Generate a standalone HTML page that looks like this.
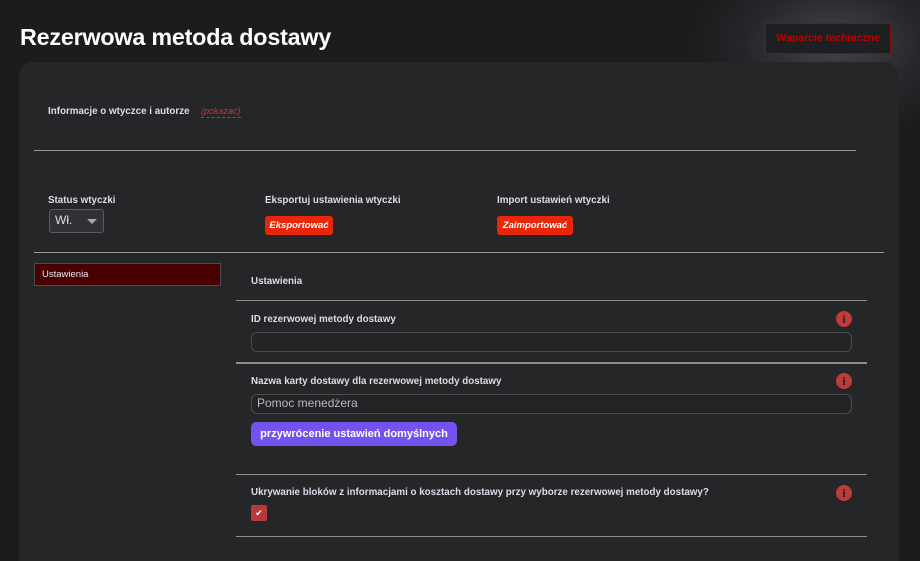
<!DOCTYPE html>
<html><head><meta charset="utf-8"><style>
*{margin:0;padding:0;box-sizing:border-box}
html,body{width:920px;height:561px;overflow:hidden}
body{background:#1b1c1e;font-family:"Liberation Sans",sans-serif;position:relative;color:#dfe0ea}
.a{position:absolute;white-space:nowrap}
h1{position:absolute;left:20px;top:24px;font-size:23.3px;font-weight:bold;color:#fff;letter-spacing:-0.2px}
.glow{position:absolute;left:690px;top:-50px;width:290px;height:190px;border-radius:50%;background:radial-gradient(ellipse at center,rgba(95,95,100,0.6),rgba(60,60,64,0.3) 45%,rgba(27,28,30,0) 70%)}
.panel{position:absolute;left:19px;top:62px;width:880px;height:499px;background:#252628;border-radius:14px 14px 0 0}
.sup{position:absolute;left:765px;top:23px;width:126px;height:31px;border:1px solid #8a0c0c;background:#1e1f21;color:#c00000;font-size:10.5px;font-weight:bold;text-align:center;line-height:29px}
.lbl{font-size:9.8px;font-weight:bold;color:#dcdde8}
.hr{position:absolute;height:1px;background:#8e8e90}
.btn{position:absolute;height:19px;background:#e8260a;border-radius:3px;color:#fff;font-size:9.5px;font-weight:bold;font-style:italic;text-align:center;line-height:19px}
.inp{position:absolute;left:251px;width:601px;height:20px;border:1.5px solid #4a4b4e;border-radius:6px;background:#232426;font-size:12px;color:#b8b9c0;padding-left:5px;line-height:17px}
.info{position:absolute;left:836px;width:16px;height:16px;border-radius:50%;background:#c03a3a;color:#222;font-size:12px;font-weight:bold;text-align:center;line-height:16px;font-family:"Liberation Serif",serif}
</style></head><body>
<div class="glow"></div>
<div class="panel"></div>
<h1>Rezerwowa metoda dostawy</h1>
<div class="sup">Wsparcie techniczne</div>

<div class="a lbl" style="left:48px;top:106px">Informacje o wtyczce i autorze</div>
<div class="a" style="left:201px;top:106px;font-size:9px;font-style:italic;color:#c0393b;border-bottom:1px dashed #c0393b;line-height:11px">(pokazać)</div>
<div class="hr" style="left:34px;top:150px;width:822px;background:#9a9a9c"></div>

<div class="a lbl" style="left:48px;top:195px">Status wtyczki</div>
<div class="a" style="left:49px;top:209px;width:55px;height:24px;border:1.5px solid #5a5b5e;border-radius:3px;background:#303134;color:#dcdde8;font-size:12px;line-height:21px;padding-left:5px">Wł.<span style="position:absolute;left:37px;top:9px;width:0;height:0;border-left:5px solid transparent;border-right:5px solid transparent;border-top:5px solid #aaa"></span></div>

<div class="a lbl" style="left:265px;top:195px">Eksportuj ustawienia wtyczki</div>
<div class="btn" style="left:265px;top:216px;width:68px">Eksportować</div>
<div class="a lbl" style="left:497px;top:195px">Import ustawień wtyczki</div>
<div class="btn" style="left:497px;top:216px;width:76px">Zaimportować</div>

<div class="hr" style="left:34px;top:252px;width:850px;background:#9a9a9c"></div>

<div class="a" style="left:34px;top:263px;width:187px;height:23px;background:#480000;border:1.5px solid #4c4c50;color:#e8e8ee;font-size:9.5px;line-height:21px;padding-left:7px">Ustawienia</div>

<div class="a lbl" style="left:251px;top:276px">Ustawienia</div>
<div class="hr" style="left:236px;top:300px;width:631px"></div>

<div class="a lbl" style="left:251px;top:314px">ID rezerwowej metody dostawy</div>
<div class="info" style="top:311px">i</div>
<div class="inp" style="top:332px"></div>
<div class="hr" style="left:236px;top:362px;width:631px;height:2px"></div>

<div class="a lbl" style="left:251px;top:376px">Nazwa karty dostawy dla rezerwowej metody dostawy</div>
<div class="info" style="top:373px">i</div>
<div class="inp" style="top:394px">Pomoc menedżera</div>
<div class="a" style="left:251px;top:422px;width:206px;height:24px;background:#7352ee;border-radius:5px;color:#fff;font-size:11px;font-weight:bold;text-align:center;line-height:24px">przywrócenie ustawień domyślnych</div>
<div class="hr" style="left:236px;top:474px;width:631px"></div>

<div class="a lbl" style="left:251px;top:487px">Ukrywanie bloków z informacjami o kosztach dostawy przy wyborze rezerwowej metody dostawy?</div>
<div class="info" style="top:485px">i</div>
<div class="a" style="left:251px;top:505px;width:16px;height:16px;background:#b53a3c;border-radius:2px;color:#fff;font-size:9px;text-align:center;line-height:16px">✔</div>
<div class="hr" style="left:236px;top:536px;width:631px"></div>
</body></html>
